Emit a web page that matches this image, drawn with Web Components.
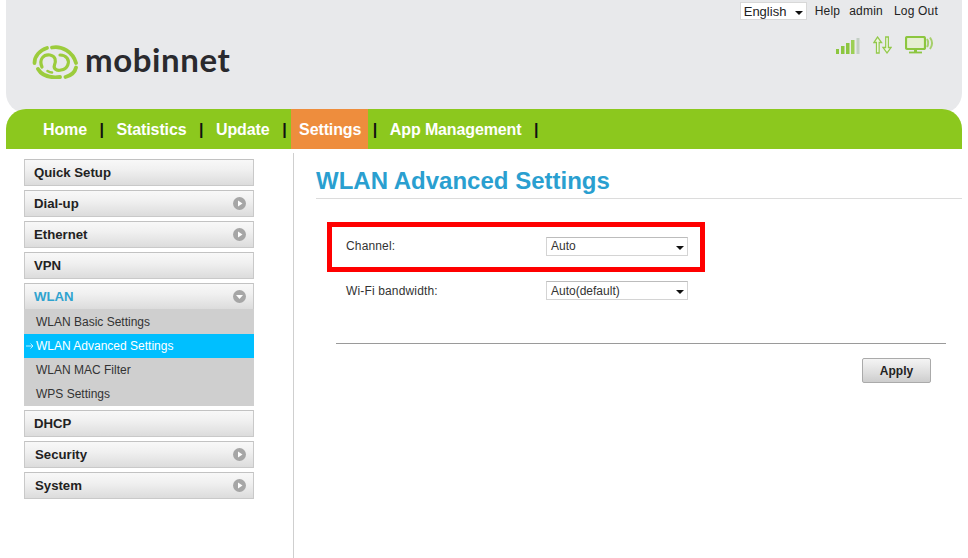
<!DOCTYPE html>
<html lang="en">
<head>
<meta charset="utf-8">
<title>WLAN Advanced Settings</title>
<style>
  html, body { margin: 0; background: #fff; overflow: hidden; }
  body { font-family: "Liberation Sans", Arial, sans-serif; font-size: 12px; color: #333; height: 558px; }
  .page { display: flex; align-items: stretch; }
</style>
</head>
<body>
<router-header></router-header>
<main-nav>
  <nav-link>Home</nav-link>
  <nav-link>Statistics</nav-link>
  <nav-link>Update</nav-link>
  <nav-link active>Settings</nav-link>
  <nav-link>App Management</nav-link>
</main-nav>
<div class="page">
  <side-menu>
    <menu-item>Quick Setup</menu-item>
    <menu-item icon="right">Dial-up</menu-item>
    <menu-item icon="right">Ethernet</menu-item>
    <menu-item>VPN</menu-item>
    <menu-item icon="down" open>WLAN</menu-item>
    <sub-menu>
      <sub-item>WLAN Basic Settings</sub-item>
      <sub-item active>WLAN Advanced Settings</sub-item>
      <sub-item>WLAN MAC Filter</sub-item>
      <sub-item>WPS Settings</sub-item>
    </sub-menu>
    <menu-item>DHCP</menu-item>
    <menu-item icon="right" indent>Security</menu-item>
    <menu-item icon="right" indent>System</menu-item>
  </side-menu>
  <settings-panel title="WLAN Advanced Settings">
    <red-box>
      <form-row label="Channel:" value="Auto"></form-row>
    </red-box>
    <form-row label="Wi-Fi bandwidth:" value="Auto(default)" style="margin:9px 0 0 52px"></form-row>
  </settings-panel>
</div>

<script>
const define = (name, html) => {
  customElements.define(name, class extends HTMLElement {
    constructor() {
      super();
      const shadow = this.attachShadow({ mode: 'open' });
      shadow.innerHTML = typeof html === 'function' ? html(this) : html;
    }
  });
};

define('router-header', `
  <style>
  :host {
    display: flex;
    justify-content: space-between;
    box-sizing: border-box;
    height: 113px;
    margin: 0 6px -4px;
    padding: 2px 24px 0 26px;
    background: #e8e9eb;
    border-radius: 0 0 20px 20px;
    font: 12px "Liberation Sans", Arial, sans-serif;
    color: #222;
  }
  .logo { display: flex; align-items: flex-start; gap: 7px; margin-top: 43px; }
  .word { margin-top: -2px; font: 700 33px/32px Lato, sans-serif; color: #2a2a2e; letter-spacing: 0.6px; }
  .right { display: flex; flex-direction: column; align-items: flex-end; }
  .links { display: flex; align-items: center; height: 18px; }
  .links span { margin-left: 8px; letter-spacing: 0.2px; }
  .links .admin { margin-left: 9px; }
  .links .out { margin-left: 11px; }
  .lang {
    box-sizing: border-box; width: 67px; height: 18px; padding-left: 3px;
    background: #fff; border: 1px solid #d8d8d8; display: flex; align-items: center; justify-content: space-between;
    font-size: 13px;
  }
  .lang i { width: 0; height: 0; border: 4px solid transparent; border-top: 4px solid #111; border-bottom: 0; margin: 3px 3px 0 0; }
  .status { display: flex; align-items: flex-end; margin: 16px 4px 0 0; gap: 13px; height: 18px; }
  svg { display: block; }
  </style>
  <div class="logo">
    <svg width="46" height="34" viewBox="0 0 46 34" fill="none" stroke="#9ccc3c" stroke-width="3.800" stroke-linecap="round">
      <path d="M2.500 18C2.500 11 8 5 15 3"/>
      <path d="M20 2.500C30 0.500 41 7 44 18"/>
      <path d="M44 22.500C43 27 39 30.500 33.500 32"/>
      <path d="M6 24C10 31 19 33 28 32"/>
      <path stroke-width="3.200" d="M10 22C6.500 14 12 9 18 10C24 11 24 16 22.500 20C21 24 25 26 29 25C36 24 38 17 35 13C33 10.500 30 10 28 10"/>
      <path stroke-width="2.600" d="M15.500 26C17 27 18.500 27.500 20 27.500"/>
    </svg>
    <span class="word">mobinnet</span>
  </div>
  <div class="right">
    <div class="links">
      <div class="lang">English<i></i></div>
      <span>Help</span><span class="admin">admin</span><span class="out">Log Out</span>
    </div>
    <div class="status">
      <svg width="24" height="16" viewBox="0 0 24 16">
        <rect x="0" y="11" width="3" height="5" fill="#8cc63f"/>
        <rect x="5" y="8" width="3.500" height="8" fill="#8cc63f"/>
        <rect x="10" y="5" width="3.500" height="11" fill="#8cc63f"/>
        <rect x="15" y="2" width="3.500" height="14" fill="#9ccf55"/>
        <rect x="20.500" y="0" width="3" height="16" fill="#c3cfc4"/>
      </svg>
      <svg width="19" height="18" viewBox="0 0 21 18" preserveAspectRatio="none" fill="#eef4e0" stroke="#93c94b" stroke-width="1.300">
        <path d="M5 1L9.500 6.500H6.800V17H3.800V6.500H1Z"/>
        <path d="M14 1H17V11.500H20L15.500 17L11 11.500H14Z"/>
      </svg>
      <svg width="29" height="18" viewBox="0 0 29 18" fill="none">
        <rect x="1" y="1" width="19" height="12" rx="1.500" stroke="#8cc63f" stroke-width="2.200" fill="#e6efd2"/>
        <path d="M9 13.500H12V16H9Z" fill="#8cc63f"/>
        <path d="M4 16.500H17" stroke="#8cc63f" stroke-width="1.800"/>
        <path d="M22 3C23.500 5 23.500 9 22 11M25 1.500C27.500 5 27.500 9.500 25 13" stroke="#a6cf6b" stroke-width="2"/>
      </svg>
    </div>
  </div>
`);

define('main-nav', `
  <style>
  :host {
    display: flex;
    position: relative;
    box-sizing: border-box;
    height: 40px;
    margin: 0 6px;
    padding-left: 29px;
    background: #8cc81e;
    border-radius: 20px 20px 0 0;
  }
  </style>
  <slot></slot>
`);

define('nav-link', (el) => `
  <style>
  :host {
    display: flex;
    font: 700 16px "Liberation Sans", Arial, sans-serif;
    letter-spacing: -0.12px;
    color: #fff;
  }
  .label {
    padding: 2px ${el.hasAttribute('active') ? 7 : 8}px 0 8px;
    line-height: 38px;
    ${el.hasAttribute('active') ? 'background: #ee8d3d;' : ''}
  }
  .sep {
    width: 13.550px;
    padding-top: 2px;
    text-align: center;
    line-height: 38px;
    color: #111;
  }
  </style>
  <div class="label"><slot></slot></div>
  <div class="sep">|</div>
`);

define('side-menu', `
  <style>
  :host {
    display: flex;
    flex-direction: column;
    flex: none;
    box-sizing: border-box;
    width: 294px;
    height: 405px;
    margin-top: 4px;
    padding: 6px 0 0 24px;
    border-right: 1px solid #cfcfcf;
  }
  </style>
  <slot></slot>
`);

define('menu-item', (el) => {
  const icon = el.getAttribute('icon');
  const open = el.hasAttribute('open');
  const glyph = icon === 'right'
    ? '<path d="M5 3.500L9.500 6.500L5 9.500Z" fill="#fff"/>'
    : '<path d="M3 5L10 5L6.500 9Z" fill="#fff"/>';
  return `
  <style>
  :host {
    display: flex;
    align-items: center;
    justify-content: space-between;
    flex: none;
    box-sizing: border-box;
    width: 230px;
    height: ${open ? 26 : 27}px;
    margin-bottom: ${open ? 0 : 4}px;
    padding: 0 7px 1px ${el.hasAttribute('indent') ? 10 : 9}px;
    background: linear-gradient(180deg, #f8f8f8 0%, #f0f0f0 40%, #dcdcdc 100%);
    border: 1px solid #c9c9c9;
    border-top-color: #c2c2c2;
    ${open ? 'border-bottom: 0;' : ''}
    font: 700 13.200px "Liberation Sans", Arial, sans-serif;
    color: ${open ? '#2fa3cf' : '#222'};
  }
  svg { display: block; }
  </style>
  <span><slot></slot></span>
  ${icon ? `<svg width="13" height="13" viewBox="0 0 13 13"><circle cx="6.500" cy="6.500" r="6.500" fill="#a6a6a6"/>${glyph}</svg>` : ''}
  `;
});

define('sub-menu', `
  <style>
  :host {
    display: block;
    width: 230px;
    margin-bottom: 4px;
    padding-top: 1px;
    background: #cfcfcf;
  }
  </style>
  <slot></slot>
`);

define('sub-item', (el) => `
  <style>
  :host {
    display: flex;
    align-items: center;
    box-sizing: border-box;
    height: 24px;
    padding-left: ${el.hasAttribute('active') ? 2 : 12}px;
    font: 12px "Liberation Sans", Arial, sans-serif;
    color: ${el.hasAttribute('active') ? '#fff' : '#333'};
    ${el.hasAttribute('active') ? 'background: #00bfff;' : ''}
  }
  svg { display: block; margin-right: 2px; }
  </style>
  ${el.hasAttribute('active') ? '<svg width="8" height="8" viewBox="0 0 8 8" fill="none" stroke="#e6f8ff" stroke-width="0.800"><path d="M0 4H7M4.500 1.500L7 4L4.500 6.500"/></svg>' : ''}
  <slot></slot>
`);

define('settings-panel', (el) => `
  <style>
  :host {
    display: block;
    flex: 1;
    margin-right: 6px;
    font: 12px "Liberation Sans", Arial, sans-serif;
    color: #333;
  }
  h1 {
    margin: 0 0 0 22px;
    height: 50px;
    box-sizing: border-box;
    padding-top: 18px;
    font: 700 24px/28px "Liberation Sans", Arial, sans-serif;
    color: #2a9fd0;
    border-bottom: 1px solid #dcdcdc;
  }
  .rows { padding: 23px 0 0; }
  hr {
    height: 1px;
    margin: 43px 16px 0 42px;
    border: 0;
    background: #9a9a9a;
  }
  .foot { display: flex; justify-content: flex-end; padding: 14px 31px 0 0; }
  </style>
  <h1>${el.getAttribute('title')}</h1>
  <div class="rows"><slot></slot></div>
  <hr>
  <div class="foot"><apply-button>Apply</apply-button></div>
`);

define('red-box', `
  <style>
  :host {
    display: flex;
    align-items: center;
    box-sizing: border-box;
    width: 378px;
    height: 50px;
    margin-left: 33px;
    padding: 0 0 2px 14px;
    border: 5px solid #f00;
  }
  </style>
  <slot></slot>
`);

define('form-row', (el) => `
  <style>
  :host {
    display: flex;
    align-items: center;
    height: 19px;
    font: 12px "Liberation Sans", Arial, sans-serif;
    color: #333;
  }
  .label { width: 200px; letter-spacing: 0.15px; }
  .select {
    display: flex;
    align-items: center;
    justify-content: space-between;
    box-sizing: border-box;
    width: 142px;
    height: 19px;
    padding-left: 4px;
    background: #fff;
    border: 1px solid #d4d4d4;
    border-top-color: #bcbcbc;
  }
  i { width: 0; height: 0; margin: 3px 3px 0 0; border: 4px solid transparent; border-top: 4px solid #111; border-bottom: 0; }
  </style>
  <div class="label">${el.getAttribute('label')}</div>
  <div class="select"><span>${el.getAttribute('value')}</span><i></i></div>
`);

define('apply-button', `
  <style>
  :host {
    display: flex;
    align-items: center;
    justify-content: center;
    box-sizing: border-box;
    width: 69px;
    height: 25px;
    background: linear-gradient(180deg, #f4f4f4 0%, #dedede 60%, #cdcdcd 100%);
    border: 1px solid #aaa;
    border-radius: 2px;
    font: 700 12px "Liberation Sans", Arial, sans-serif;
    color: #222;
  }
  </style>
  <slot></slot>
`);
</script>
</body>
</html>
